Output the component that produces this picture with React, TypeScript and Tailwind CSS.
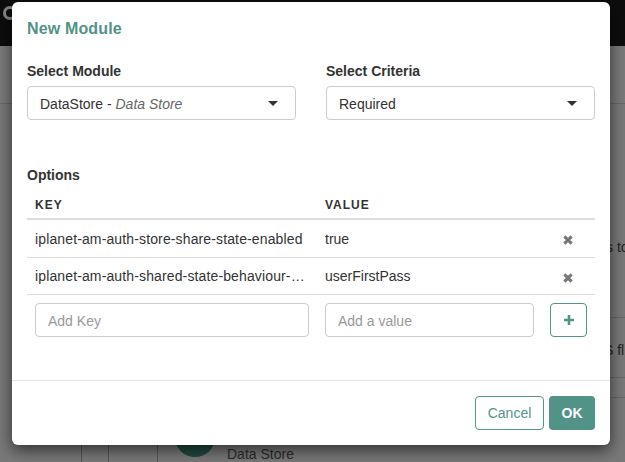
const font = { fontFamily: '"Liberation Sans", Arial, sans-serif' };

function Caret() {
  return <span className="ml-auto mr-[17px] h-0 w-0 border-x-[5px] border-t-[5px] border-x-transparent border-t-[#333]" />;
}

function SelectBox({ children }: { children: React.ReactNode }) {
  return (
    <div className="mt-[5px] flex h-[34px] w-[269px] items-center rounded border border-[#ccc] pl-3 text-sm text-[#333]">
      <span className="pt-[1px]">{children}</span>
      <Caret />
    </div>
  );
}

function CloseIcon() {
  return (
    <svg width="10" height="10" viewBox="0 0 10 10" className="ml-auto mr-[22px] mt-[3px]">
      <path d="M1.4 1.4 8.6 8.6M8.6 1.4 1.4 8.6" stroke="#777" strokeWidth="3" />
    </svg>
  );
}

function OptionRow({ k, v, h }: { k: string; v: string; h: string }) {
  return (
    <div className={`flex items-center border-b border-[#ddd] pl-2 text-sm text-[#333] ${h}`}>
      <span className="w-[290px] whitespace-nowrap tracking-[0.13px]">{k}</span>
      <span>{v}</span>
      <CloseIcon />
    </div>
  );
}

export default function App() {
  return (
    <div className="relative h-[462px] w-[625px] overflow-hidden bg-[#787878]" style={font}>
      {/* page behind the overlay */}
      <div className="h-[46px] bg-[#0d0d0d]" />
      <div className="h-[58px] border-b border-[#666] bg-[#7a7a7a]" />
      <div className="absolute left-[3px] top-[6px] h-[14px] w-[14px] rounded-full border-[3px] border-[#8a8a8a]" />
      <div className="absolute left-[606px] top-[237px] whitespace-nowrap text-sm text-[#222]">s to</div>
      <div className="absolute left-[604px] top-[340px] whitespace-nowrap text-sm text-[#222]">S fl</div>
      <div className="absolute right-0 top-[317px] h-px w-[20px] bg-[#666]" />
      <div className="absolute right-0 top-[377px] h-px w-[20px] bg-[#666]" />
      <div className="absolute right-0 top-[397px] h-px w-[20px] bg-[#666]" />
      <div className="absolute left-[81px] top-[440px] h-[22px] w-px bg-[#555]" />
      <div className="absolute left-[108px] top-[440px] h-[22px] w-px bg-[#555]" />
      <div className="absolute left-[157px] top-[440px] h-[22px] w-px bg-[#555]" />
      <div className="absolute left-[175px] top-[417px] h-[40px] w-[40px] rounded-full bg-[#204a3f]" />
      <div className="absolute left-[227px] top-[444px] text-sm text-[#2b2b2b]">Data Store</div>

      {/* modal */}
      <div className="absolute left-[12px] top-[2px] h-[443px] w-[598px] rounded-md bg-white shadow-[0_5px_15px_rgba(0,0,0,0.6)]">
        <div className="px-[15px] pt-[17px]">
          <h4 className="text-base font-bold leading-[20px] tracking-[0.15px] text-[#519387]">New Module</h4>
          <div className="mt-[22px] flex gap-[30px]">
            <div>
              <label className="block text-sm font-bold leading-[20px] text-[#333]">Select Module</label>
              <SelectBox>
                DataStore -&nbsp;<em className="text-[#666]">Data Store</em>
              </SelectBox>
            </div>
            <div>
              <label className="block text-sm font-bold leading-[20px] text-[#333]">Select Criteria</label>
              <SelectBox>Required</SelectBox>
            </div>
          </div>
          <div className="mt-[45px] w-[568px]">
            <div className="text-sm font-bold leading-[20px] text-[#333]">Options</div>
            <div className="mt-[9px] flex h-[26px] items-center border-b-2 border-[#ddd] pb-[2px] pl-2 text-xs font-bold tracking-[1px] text-[#333]">
              <span className="w-[290px]">KEY</span>
              <span>VALUE</span>
            </div>
            <OptionRow k="iplanet-am-auth-store-share-state-enabled" v="true" h="h-[38px]" />
            <OptionRow k="iplanet-am-auth-shared-state-behaviour-…" v="userFirstPass" h="h-[37px]" />
            <div className="flex pl-2 pt-[8px]">
              <div className="flex h-[34px] w-[274px] items-center rounded border border-[#ccc] pl-3 pt-[1px] text-sm text-[#999]">Add Key</div>
              <div className="ml-4 flex h-[34px] w-[209px] items-center rounded border border-[#ccc] pl-3 pt-[1px] text-sm text-[#999]">Add a value</div>
              <div className="ml-4 flex h-[34px] w-[37px] items-center justify-center rounded border border-[#519387]">
                <svg width="12" height="12" viewBox="0 0 12 12">
                  <path d="M6 1v10M1 6h10" stroke="#519387" strokeWidth="2.6" />
                </svg>
              </div>
            </div>
          </div>
        </div>
        <div className="mt-[43px] flex justify-end gap-[5px] border-t border-[#e5e5e5] px-[15px] pt-[15px]">
          <div className="flex h-[34px] w-[69px] items-center justify-center rounded border border-[#519387] text-sm text-[#519387]">Cancel</div>
          <div className="flex h-[34px] w-[46px] items-center justify-center rounded bg-[#519387] text-sm font-bold text-white">OK</div>
        </div>
      </div>
    </div>
  );
}
